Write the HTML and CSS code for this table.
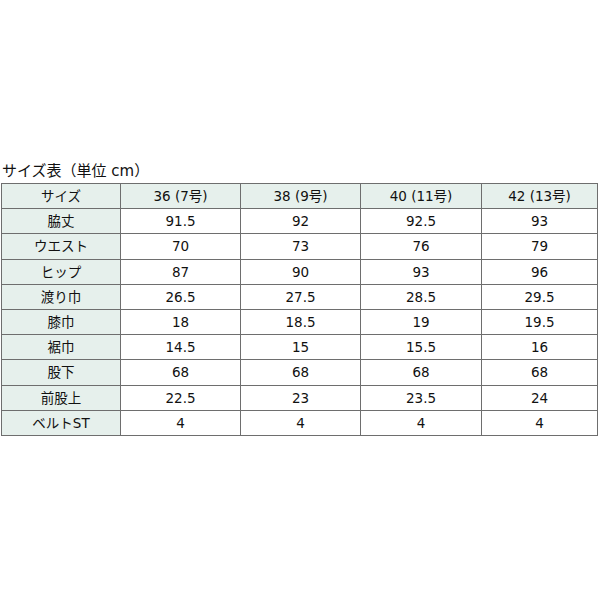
FILE: index.html
```html
<!DOCTYPE html>
<html lang="ja">
<head>
<meta charset="utf-8">
<link rel="stylesheet" href="styles.css">
</head>
<body>
<div class="page">
  <h1 class="title">サイズ表（単位 cm）</h1>
  <table class="size">
    <colgroup>
      <col class="c0"><col class="c1"><col class="c2"><col class="c3"><col class="c4">
    </colgroup>
    <thead>
      <tr><th class="lab">サイズ</th><th>36 (7号)</th><th>38 (9号)</th><th>40 (11号)</th><th>42 (13号)</th></tr>
    </thead>
    <tbody>
      <tr><th class="lab">脇丈</th><td>91.5</td><td>92</td><td>92.5</td><td>93</td></tr>
      <tr><th class="lab">ウエスト</th><td>70</td><td>73</td><td>76</td><td>79</td></tr>
      <tr><th class="lab">ヒップ</th><td>87</td><td>90</td><td>93</td><td>96</td></tr>
      <tr><th class="lab">渡り巾</th><td>26.5</td><td>27.5</td><td>28.5</td><td>29.5</td></tr>
      <tr><th class="lab">膝巾</th><td>18</td><td>18.5</td><td>19</td><td>19.5</td></tr>
      <tr><th class="lab">裾巾</th><td>14.5</td><td>15</td><td>15.5</td><td>16</td></tr>
      <tr><th class="lab">股下</th><td>68</td><td>68</td><td>68</td><td>68</td></tr>
      <tr><th class="lab">前股上</th><td>22.5</td><td>23</td><td>23.5</td><td>24</td></tr>
      <tr><th class="lab">ベルトST</th><td>4</td><td>4</td><td>4</td><td>4</td></tr>
    </tbody>
  </table>
</div>
</body>
</html>
```
FILE: styles.css
```css
html, body {
  margin: 0;
  padding: 0;
  background: #fff;
}
body {
  font-family: "DejaVu Sans", "Noto Sans CJK JP", sans-serif;
  color: #111;
}
.page {
  padding: 161px 0 0 1px;
}
.title {
  margin: 0 0 2px 1px;
  font-size: 15px;
  font-weight: normal;
  line-height: 20px;
}
.size {
  border-collapse: collapse;
  table-layout: fixed;
  width: 597px;
  font-size: 13.5px;
}
.c0 { width: 119px; }
.c1 { width: 120px; }
.c2 { width: 120px; }
.c3 { width: 121px; }
.c4 { width: 116px; }
.size th, .size td {
  border: 1px solid #6e6e6e;
  height: 24.2px;
  padding: 0;
  text-align: center;
  vertical-align: middle;
  font-weight: normal;
  line-height: 16px;
}
.size thead th {
  background: #e6f0ec;
}
.size .lab {
  background: #e6f0ec;
}
```
